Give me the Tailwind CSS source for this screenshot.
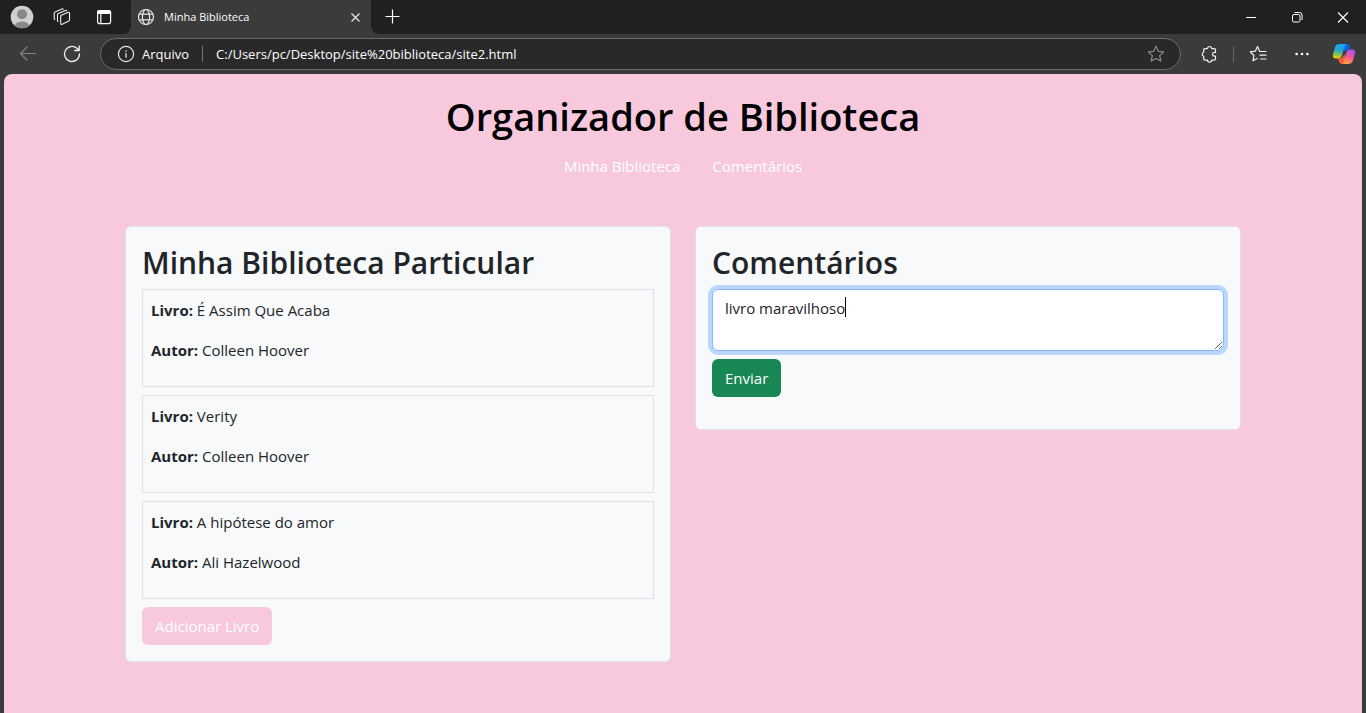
<!DOCTYPE html>
<html lang="pt-BR">
<head>
<meta charset="utf-8">
<meta name="viewport" content="width=device-width, initial-scale=1">
<title>Minha Biblioteca</title>
<script src="https://cdn.jsdelivr.net/npm/@tailwindcss/browser@4"></script>
</head>
<body class="flex h-screen flex-col overflow-hidden bg-[#3b3b3b] font-['Segoe_UI','Open_Sans',sans-serif] text-[15px] leading-6 text-[#212529]">

<!-- Tab strip -->
<div class="flex h-[34px] shrink-0 items-stretch bg-[#3b3b3b] text-white">
  <div class="flex w-[131px] items-center rounded-br-lg bg-[#202020] pl-[10px]">
    <button aria-label="Perfil" class="size-6">
      <svg viewBox="0 0 24 24" class="size-6"><defs><clipPath id="av"><circle cx="12" cy="12" r="11.3"/></clipPath></defs><g clip-path="url(#av)"><rect width="24" height="24" fill="#d2d0ce"/><circle cx="12" cy="9.3" r="5" fill="#8a8886"/><path d="M3.6 24c0-4.500 3.500-7.500 8.400-7.500s8.400 3 8.400 7.500z" fill="#8a8886"/></g></svg>
    </button>
    <button aria-label="Workspaces" class="ml-[18px] size-5">
      <svg viewBox="0 0 20 20" class="size-5" fill="none" stroke="#f0f0f0" stroke-width="1.100" stroke-linejoin="round" stroke-linecap="round"><path d="M8.700 9.300q0-.8.7-1.100l6.700-2.900q1.400-.4 1.400 1v6.500q0 .8-.7 1.200l-6.600 3.300q-1.500.5-1.500-1zM6 14.500q-.5-.4-.5-1.100V7.900q0-.9.8-1.300l7.200-3.200q.7-.3 1.200.3M2.800 12.500q-.6-.4-.6-1.200V6.200q0-.9.8-1.300l7-3q.8-.3 1.300.3"/></svg>
    </button>
    <button aria-label="Guias verticais" class="ml-[22px] size-5">
      <svg viewBox="0 0 20 20" class="size-5" fill="none" stroke="#fff" stroke-width="1.200"><rect x="3.600" y="3.600" width="13" height="13" rx="2.200"/><path d="M3.600 6.500V5.500q0-2 2-2h9q2 0 2 2v1z" fill="#fff"/><path d="M6.800 7v9.500"/></svg>
    </button>
  </div>
  <div class="flex w-60 items-center rounded-t-lg bg-[#3b3b3b] pl-1.5 pr-2">
    <svg viewBox="0 0 18 18" class="size-[18px]" fill="none" stroke="#e6e6e6" stroke-width="1.200"><circle cx="9" cy="9" r="7.500"/><ellipse cx="9" cy="9" rx="3.600" ry="7.500"/><path d="M2.300 6.200h13.400M2.300 11.800h13.400"/></svg>
    <span class="ml-[9px] flex-1 text-[11px]">Minha Biblioteca</span>
    <button aria-label="Fechar guia" class="size-4"><svg viewBox="0 0 16 16" class="size-4" stroke="#e8e8e8" stroke-width="1.200"><path d="M4.500 4.500l8 8M12.500 4.500l-8 8"/></svg></button>
  </div>
  <div class="flex flex-1 items-center rounded-bl-lg bg-[#202020] pl-3">
    <button aria-label="Nova guia" class="size-5"><svg viewBox="0 0 20 20" class="size-5" stroke="#fff" stroke-width="1.200"><path d="M9.500 2.500v14M2.500 9.500h14"/></svg></button>
    <div class="ml-auto flex">
      <button aria-label="Minimizar" class="flex w-[46px] justify-center"><svg viewBox="0 0 16 16" class="size-4" stroke="#fff"><path d="M3 8.500h10"/></svg></button>
      <button aria-label="Restaurar" class="flex w-[46px] justify-center"><svg viewBox="0 0 16 16" class="size-4" fill="none" stroke="#fff"><rect x="3.500" y="5.500" width="7.500" height="7.500" rx="1.500"/><path d="M5.500 3.500h5q2.500 0 2.500 2.500v5"/></svg></button>
      <button aria-label="Fechar" class="flex w-[46px] justify-center"><svg viewBox="0 0 16 16" class="size-4" stroke="#fff" stroke-width="1.100"><path d="M3 3.500l10 10M13 3.500l-10 10"/></svg></button>
    </div>
  </div>
</div>

<!-- Address bar -->
<div class="flex h-10 shrink-0 items-center bg-[#3b3b3b] pl-[18px] pr-2.5 text-white">
  <button aria-label="Voltar" class="size-5"><svg viewBox="0 0 20 20" class="size-5" fill="none" stroke="#858585" stroke-width="1.100" stroke-linecap="round" stroke-linejoin="round"><path d="M17.500 9.500H2.500M9 3L2.500 9.500 9 16"/></svg></button>
  <button aria-label="Atualizar" class="ml-6 size-5"><svg viewBox="0 0 20 20" class="size-5" fill="none" stroke="#f0f0f0" stroke-width="1.300" stroke-linecap="round" stroke-linejoin="round"><path d="M17.500 10a7.500 7.500 0 1 1-2.600-5.700L17 6.200M17.200 2v4.500h-4.500"/></svg></button>
  <div class="ml-[18px] flex h-8 flex-1 items-center rounded-full border border-[#6b6b6b] bg-[#292929] pl-4 pr-[15px] text-[13px]">
    <svg viewBox="0 0 18 18" class="size-[18px] shrink-0" fill="none" stroke="#e6e6e6" stroke-width="1.200"><circle cx="9" cy="9" r="7.600"/><path d="M9 8v4.700M9 5.200v1.500"/></svg>
    <label for="url" class="ml-[7px]">Arquivo</label>
    <span class="ml-[13px] h-4 w-px bg-[#777]"></span>
    <input id="url" type="text" value="C:/Users/pc/Desktop/site%20biblioteca/site2.html" class="ml-[13px] min-w-0 flex-1 bg-transparent outline-none">
    <button aria-label="Favoritar" class="size-[18px]"><svg viewBox="0 0 18 18" class="size-[18px]" fill="none" stroke="#8c8c8c" stroke-width="1.200" stroke-linejoin="round"><path d="M9 1.300l2.300 5 5.400.6-4 3.700 1.100 5.500L9 13.400l-4.800 2.700 1.100-5.500-4-3.700 5.400-.6z"/></svg></button>
  </div>
  <button aria-label="Extensões" class="ml-[18px] size-5"><svg viewBox="0 0 20 20" class="size-5" fill="none" stroke="#f0f0f0" stroke-width="1.200" stroke-linejoin="round"><path d="M8.500 4.600a2.100 2.100 0 0 1 4.200 0h2.500q1.300 0 1.300 1.300v2.500h-1a1.900 1.900 0 0 0 0 3.800h1v2.600q0 1.300-1.300 1.300h-2.500a2.100 2.100 0 0 1-4.200 0H6q-1.300 0-1.300-1.300v-2.500a2.100 2.100 0 0 1 0-4V5.900q0-1.300 1.300-1.300z"/></svg></button>
  <span class="ml-3.5 h-4 w-px bg-[#666]"></span>
  <button aria-label="Favoritos" class="ml-3.5 size-5"><svg viewBox="0 0 20 20" class="size-5" fill="none" stroke="#f0f0f0" stroke-width="1.200" stroke-linejoin="round" stroke-linecap="round"><path d="M12.500 7.500h-.8L9.500 2.600 7.300 7.200l-5.100.7 3.700 3.600-.9 5.300 4.200-2.300M12.500 7.500H18M12 11.200h6M12.500 15H18"/></svg></button>
  <button aria-label="Configurações e mais" class="ml-6 size-5"><svg viewBox="0 0 20 20" class="size-5" fill="#fff"><circle cx="4.600" cy="10" r="1.300"/><circle cx="10" cy="10" r="1.300"/><circle cx="15.400" cy="10" r="1.300"/></svg></button>
  <button aria-label="Copilot" class="ml-5 size-6">
    <svg viewBox="0 0 24 24" class="size-6">
      <defs>
        <linearGradient id="ca" x1=".5" y1="0" x2=".3" y2="1"><stop offset="0" stop-color="#15a6f5"/><stop offset=".45" stop-color="#27a8c9"/><stop offset=".75" stop-color="#8bc34a"/><stop offset="1" stop-color="#fad000"/></linearGradient>
        <linearGradient id="cb" x1=".7" y1="0" x2=".4" y2="1"><stop offset="0" stop-color="#a64ff0"/><stop offset=".5" stop-color="#f0569a"/><stop offset="1" stop-color="#ffa044"/></linearGradient>
        <linearGradient id="cc"><stop offset="0" stop-color="#1687f0"/><stop offset="1" stop-color="#0a4cc4"/></linearGradient>
      </defs>
      <path d="M9 2h6.500q1.700 0 2.200 1.700l1.100 3.800h-2.500q-2.300 0-3 2.400z" fill="url(#cc)"/>
      <path d="M14.500 22H9.800q-2 0-2.600-1.900L6 16.200h2.500q2 0 2.700-2.200L12.500 12z" fill="#f45b3c"/>
      <path d="M7.500 2h7q-1.400.4-2 2.600L10.200 13q-.9 3.400-4.100 3.400H3.400Q.2 16.400 1 12.600L3 5.300Q4 2 7.500 2z" fill="url(#ca)"/>
      <path d="M18.300 7.500h2.300q3.200 0 2.400 3.800l-2 7.300q-1 3.400-4.500 3.400H9.800q1.500-.4 2.100-2.600l2.300-8.500q.9-3.400 4.100-3.400z" fill="url(#cb)"/>
    </svg>
  </button>
</div>

<!-- Page -->
<div class="mx-1 min-h-0 flex-1 overflow-hidden rounded-t-lg bg-[#f8c8dc]">
  <header class="py-4 text-center">
    <h1 class="mb-2 text-[38px] leading-[52px] font-semibold text-black">Organizador de Biblioteca</h1>
    <nav class="-mt-1 flex justify-center">
      <a href="#biblioteca" class="px-4 py-2 text-white">Minha Biblioteca</a>
      <a href="#comentarios" class="px-4 py-2 text-white">Comentários</a>
    </nav>
  </header>
  <main class="mx-auto mt-6 grid max-w-[1140px] grid-cols-2 items-start gap-6 px-3">
    <section id="biblioteca" class="rounded-md border border-[#dee2e6] bg-[#f8f9fa] p-4">
      <h2 class="mb-1.5 text-[30px] leading-10 font-semibold">Minha Biblioteca Particular</h2>
      <ul class="space-y-2">
        <li class="space-y-4 border border-[#dee2e6] px-2 pt-2 pb-6"><p><b>Livro:</b> É Assim Que Acaba</p><p><b>Autor:</b> Colleen Hoover</p></li>
        <li class="space-y-4 border border-[#dee2e6] px-2 pt-2 pb-6"><p><b>Livro:</b> Verity</p><p><b>Autor:</b> Colleen Hoover</p></li>
        <li class="space-y-4 border border-[#dee2e6] px-2 pt-2 pb-6"><p><b>Livro:</b> A hipótese do amor</p><p><b>Autor:</b> Ali Hazelwood</p></li>
      </ul>
      <button class="mt-2 block rounded-md bg-[#f8c8dc] px-[13px] py-[7px] text-white">Adicionar Livro</button>
    </section>
    <section id="comentarios" class="rounded-md border border-[#dee2e6] bg-[#f8f9fa] p-4">
      <h2 id="ct" class="mb-1.5 text-[30px] leading-10 font-semibold">Comentários</h2>
      <form class="mb-4">
        <div class="relative">
          <textarea rows="2" aria-labelledby="ct" class="block h-[62px] w-full resize-y rounded-md border border-[#86b7fe] bg-white px-3 py-1.5 ring-4 ring-[#bcd6fd] outline-none">livro maravilhoso</textarea>
          <span class="absolute top-2 left-[133px] h-5 w-px bg-black"></span>
        </div>
        <button type="button" class="mt-2 block rounded-md bg-[#198754] px-[13px] py-[7px] text-white">Enviar</button>
      </form>
    </section>
  </main>
</div>
</body>
</html>
